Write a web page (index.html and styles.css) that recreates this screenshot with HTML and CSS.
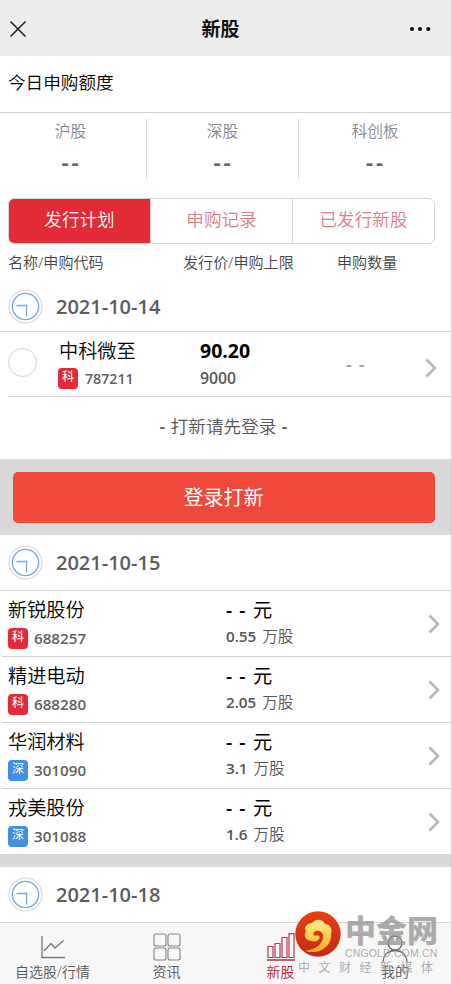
FILE: index.html
```html
<!DOCTYPE html>
<html lang="zh-CN">
<head>
<meta charset="utf-8">
<title>新股</title>
<link rel="stylesheet" href="styles.css">
</head>
<body>
<svg width="0" height="0" class="defs">
  <symbol id="clock" viewBox="0 0 35 35"><circle cx="17.5" cy="17.5" r="16.5" fill="none" stroke="#d8d8dc" stroke-width="1.2"/><circle cx="17.5" cy="17.5" r="13.2" fill="none" stroke="#74a9d8" stroke-width="1.3"/><path d="M8.500 16.500H19.500M18.500 15.500V27.500" fill="none" stroke="#74a9d8" stroke-width="1.3"/></symbol>
  <symbol id="chevron" viewBox="0 0 12 20"><path d="M1.5 1.5L10 10L1.5 18.5" fill="none" stroke="#b5b5b5" stroke-width="2.5"/></symbol>
</svg>
<div class="page">
  <header class="topbar">
    <svg width="18" height="18" viewBox="0 0 18 18"><path d="M1.5 1.5L16.5 16.5M16.5 1.5L1.5 16.5" stroke="#1c1c1c" stroke-width="1.5"/></svg>
    <h1>新股</h1>
    <svg width="22" height="6" viewBox="0 0 22 6" fill="#111"><circle cx="3" cy="3" r="2.1"/><circle cx="11" cy="3" r="2.1"/><circle cx="19.3" cy="3" r="2.1"/></svg>
  </header>
  <div class="quota-title">今日申购额度</div>
  <section class="quotas">
    <div class="quota"><span>沪股</span><b>--</b></div>
    <div class="quota"><span>深股</span><b>--</b></div>
    <div class="quota"><span>科创板</span><b>--</b></div>
  </section>
  <nav class="tabs"><span class="tab active">发行计划</span><span class="tab">申购记录</span><span class="tab">已发行新股</span></nav>
  <div class="columns"><span>名称/申购代码</span><span>发行价/申购上限</span><span>申购数量</span></div>
  <div class="date first"><svg><use href="#clock"/></svg>2021-10-14</div>
  <div class="today">
    <i class="radio"></i>
    <div class="cell name"><p>中科微至</p><div class="code"><em class="badge">科</em>787211</div></div>
    <div class="cell price"><strong>90.20</strong><span>9000</span></div>
    <div class="count">- -</div>
    <svg class="chev"><use href="#chevron"/></svg>
  </div>
  <div class="hint"><b>-</b> 打新请先登录 <b>-</b></div>
  <div class="login"><button>登录打新</button></div>
  <div class="date"><svg><use href="#clock"/></svg>2021-10-15</div>
  <ul class="stocks">
    <li><div class="cell name"><p>新锐股份</p><div class="code"><em class="badge">科</em>688257</div></div><div class="cell price"><div class="amount"><b>- -</b>元</div><div class="lots">0.55 <span>万股</span></div></div><svg class="chev"><use href="#chevron"/></svg></li>
    <li><div class="cell name"><p>精进电动</p><div class="code"><em class="badge">科</em>688280</div></div><div class="cell price"><div class="amount"><b>- -</b>元</div><div class="lots">2.05 <span>万股</span></div></div><svg class="chev"><use href="#chevron"/></svg></li>
    <li><div class="cell name"><p>华润材料</p><div class="code"><em class="badge blue">深</em>301090</div></div><div class="cell price"><div class="amount"><b>- -</b>元</div><div class="lots">3.1 <span>万股</span></div></div><svg class="chev"><use href="#chevron"/></svg></li>
    <li><div class="cell name"><p>戎美股份</p><div class="code"><em class="badge blue">深</em>301088</div></div><div class="cell price"><div class="amount"><b>- -</b>元</div><div class="lots">1.6 <span>万股</span></div></div><svg class="chev"><use href="#chevron"/></svg></li>
  </ul>
  <div class="gap"></div>
  <div class="date last"><svg><use href="#clock"/></svg>2021-10-18</div>
  <footer class="nav">
    <a><svg width="26" height="28" viewBox="0 0 26 28"><path d="M2 3V24.500H25M4 18L11 10.500L15 15L23.500 7.500" fill="none" stroke="#777" stroke-width="1.3"/></svg>自选股/行情</a>
    <a><svg width="28" height="28" viewBox="0 0 28 28" fill="none" stroke="#858585" stroke-width="1.1"><rect x="1" y="1" width="12" height="12" rx="2"/><rect x="15" y="1" width="12" height="12" rx="2"/><rect x="1" y="15" width="12" height="12" rx="2"/><rect x="15" y="15" width="12" height="12" rx="2"/></svg>资讯</a>
    <a class="on"><svg width="28" height="28" viewBox="0 0 28 28" fill="none" stroke="#b63a4a" stroke-width="1.2"><path d="M1 13.500H6V24.500H1ZM8 10.500H13V24.500H8ZM15 4.500H20V24.500H15ZM22 .6H27V24.500H22Z"/><path d="M0 27H28" stroke-width="1.6"/></svg>新股</a>
    <a><svg width="28" height="28" viewBox="0 0 28 28" fill="none" stroke="#666" stroke-width="1.3"><circle cx="14" cy="8" r="7"/><path d="M2 28C2 19 8 15.500 14 15.500S26 19 26 28"/></svg>我的</a>
  </footer>
  <div class="watermark">
    <svg width="46" height="46" viewBox="0 0 46 46"><defs><linearGradient id="r" x1="0" y1="0" x2="0" y2="1"><stop offset="0" stop-color="#e8400f"/><stop offset="1" stop-color="#c42a18"/></linearGradient><linearGradient id="g" x1="0" y1="0" x2="0" y2="1"><stop offset="0" stop-color="#fff08a"/><stop offset="1" stop-color="#f5a91c"/></linearGradient></defs><circle cx="23" cy="23" r="22.7" fill="url(#r)"/><path d="M17 30C11 30 8 25 11 20C8 16 13 12 17 12C21 7 28 8 30 13C35 13 38 18 36 23C37 33 28 42 16 41C14 41 12 40.500 11 39.500C19 39 27 34 28 27C29 22 25 18.500 21 20C18 21 18 24 20 25C22 23.500 25 24.500 24.500 27C24 30 20 31 17 30Z" fill="url(#g)"/></svg>
    <div class="wm-text"><b>中金网</b><span>CNGOLD.COM.CN</span></div>
    <div class="wm-sub">中文财经新媒体</div>
  </div>
</div>
</body>
</html>
```

FILE: styles.css
```css
* { box-sizing: border-box; margin: 0; padding: 0; }
body { width: 452px; height: 984px; overflow: hidden; background: #fff; color: #555; font-family: "Open Sans", "Noto Sans CJK SC", sans-serif; font-weight: 350; }
.defs { display: block; }
.page { position: relative; width: 452px; height: 984px; border-right: 1px solid #d0d0d0; display: flex; flex-direction: column; }
.page > * { flex: none; }
.topbar { height: 56px; background: #ececec; display: flex; align-items: center; justify-content: space-between; padding: 2px 20px 0 9px; }
.topbar h1 { font-size: 19px; line-height: 28px; font-weight: 700; color: #111; padding-left: 5px; }
.quota-title { height: 57px; border-bottom: 1px solid #d2d2d2; padding: 12px 8px; font-size: 17.6px; line-height: 28px; color: #000; }
.quotas { height: 85px; padding-top: 6px; display: flex; }
.quota { width: 152px; height: 60px; border-right: 1px solid #ddd; text-align: center; display: flex; flex-direction: column; }
.quota:first-child { width: 147px; padding-right: 5px; }
.quota:last-child { border: 0; }
.quota span { font-size: 15.7px; line-height: 24px; color: #888; }
.quota b { font-size: 22px; font-weight: 700; line-height: 24px; padding: 6px 0 0 2px; letter-spacing: 3px; color: #666; }
.tabs { height: 46px; width: 427px; margin-left: 8px; display: flex; border: 1px solid #d8d8d8; border-radius: 6px; overflow: hidden; }
.tab { flex: 1; text-align: center; font-size: 17.6px; line-height: 41px; color: #dd7c88; border-left: 1px solid #d8d8d8; }
.tab.active { background: #e32b38; color: #fff; border: 0; }
.columns { height: 37px; display: flex; font-size: 15.1px; line-height: 36px; padding-left: 8px; color: #444; }
.columns span:nth-child(1) { width: 175px; }
.columns span:nth-child(2) { width: 154px; }
.date { height: 56px; padding-left: 8px; display: flex; align-items: center; gap: 13px; font-size: 20px; font-weight: 600; color: #5c5c5c; border-bottom: 1px solid #d5d5d5; }
.date svg { width: 35px; height: 35px; }
.date.first { height: 51px; }
.today { height: 65px; margin-left: 8px; border-bottom: 1px solid #d2d2d2; display: flex; }
.radio { width: 29px; height: 29px; border: 1px solid #d2d2d2; border-radius: 50%; margin: 16px 21px 0 0; }
.cell { display: flex; flex-direction: column; }
.cell p { font-size: 19.2px; line-height: 28px; color: #000; }
.name { height: 64px; padding-top: 5px; }
.today .name { width: 142px; }
.today .name p { padding-left: 1px; }
.code { display: flex; align-items: center; height: 20px; gap: 6px; margin-top: 4px; font-size: 15.2px; font-weight: 600; color: #606060; }
.today .code { font-size: 14.2px; margin-top: 3px; gap: 7px; }
.badge { width: 20px; height: 21px; border-radius: 4px; background: #e32b38; color: #fff; font-style: normal; font-weight: 400; font-size: 12px; line-height: 17px; text-align: center; }
.badge.blue { background: #3f8fe4; }
.price strong { color: #000; font-size: 19.5px; line-height: 28px; font-weight: 700; }
.today .price { width: 146px; padding-top: 5px; }
.today .price span { font-size: 15.8px; font-weight: 600; line-height: 27px; }
.count { font-size: 18px; font-weight: 600; color: #999; width: 79px; line-height: 65px; letter-spacing: 1.2px; }
.chev { width: 12px; height: 20px; margin-top: 26px; }
.hint { height: 62px; text-align: center; padding-right: 4px; font-size: 17.6px; line-height: 58px; color: #555; }
.hint b { font-weight: 600; margin: 0 1px; }
.login { height: 76px; background: #d8d8d8; padding: 13px 17px 0 12.5px; }
.login button { display: block; width: 422px; height: 51px; border: 0; border-radius: 5px; background: #f04839; color: #fff; font: 400 20px/52px "Open Sans", "Noto Sans CJK SC", sans-serif; }
.stocks { list-style: none; padding-left: 2px; }
.stocks li { height: 66px; padding-left: 6px; display: flex; border-bottom: 1px solid #d2d2d2; }
.stocks li:last-child { height: 65px; border: 0; }
.stocks .name { width: 218px; }
.stocks .price { width: 202px; padding-top: 5px; }
.amount { font-size: 19.2px; line-height: 28px; font-weight: 400; color: #000; display: flex; }
.amount b { font-weight: 600; width: 27px; letter-spacing: 1px; }
.lots { font-size: 15.2px; font-weight: 600; line-height: 25px; }
.lots span { font-size: 15.6px; font-weight: 350; margin-left: 2px; }
.stocks .chev { margin-top: 23px; }
.gap { height: 13px; background: #d8d8d8; }
.nav { height: 61px; background: #f7f7f7; display: flex; }
.nav a { width: 114px; display: flex; flex-direction: column; align-items: center; font-size: 14px; line-height: 22px; color: #555; padding-top: 10px; }
.nav a:first-child { width: 105px; }
.nav a:nth-child(2) { width: 123px; }
.nav svg { height: 28px; flex: none; }
.nav a.on { color: #b81c30; width: 105px; }
.nav a:last-child { width: 118px; padding-left: 6px; }
.nav a:last-child svg { margin: 2px 0 -2px; }
.watermark { position: absolute; left: 295px; top: 911px; width: 148px; display: grid; grid-template-columns: 50px 1fr; }
.wm-text { display: flex; flex-direction: column; color: rgba(150,150,150,.8); }
.wm-text b { font: 900 31px/35px "Noto Sans CJK SC", sans-serif; }
.wm-text span { font: 10.5px/14px "Liberation Sans", sans-serif; letter-spacing: .15px; }
.wm-sub { grid-column: 1 / 3; font-size: 12px; font-weight: 400; line-height: 16px; letter-spacing: 8.5px; padding-left: 3px; color: #aaa; white-space: nowrap; }
```
